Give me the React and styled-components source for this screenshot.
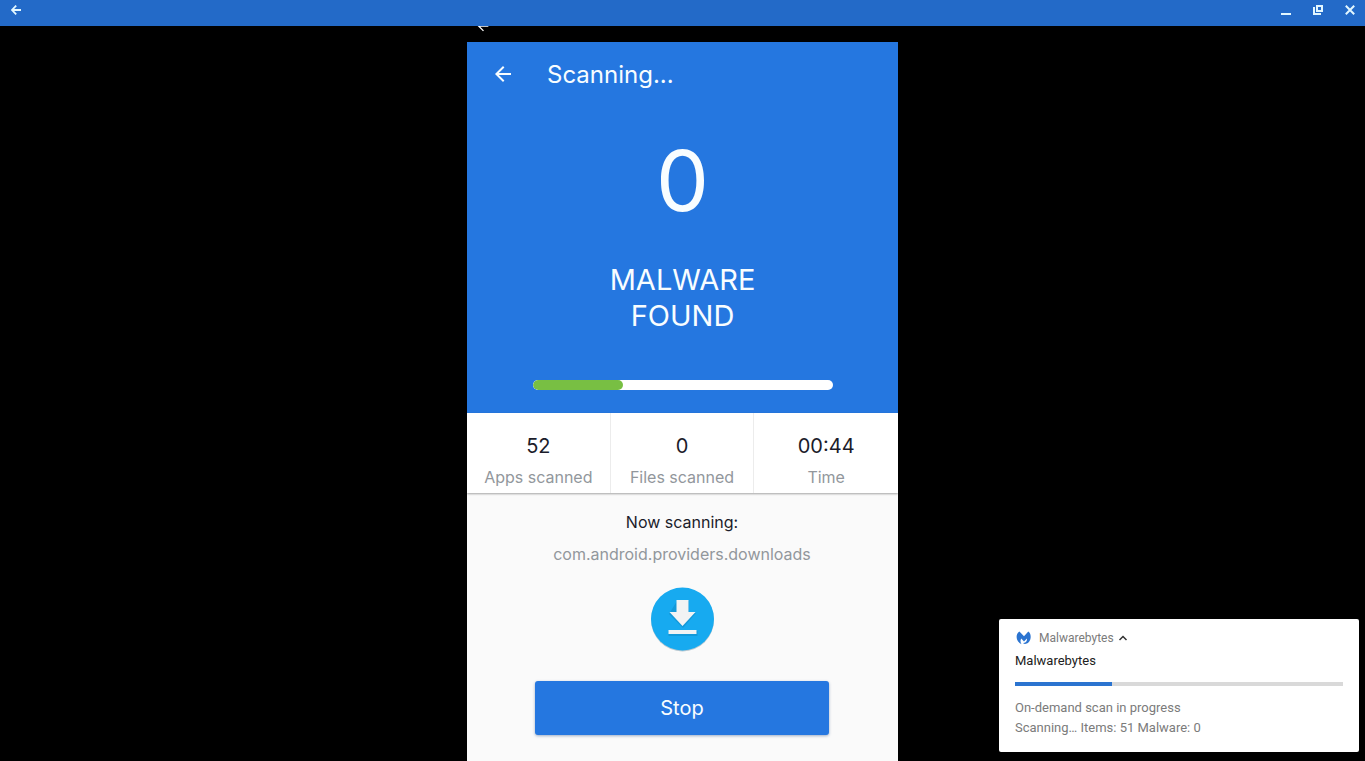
import { useState } from "react";
import styled, { createGlobalStyle, ThemeProvider } from "styled-components";

const theme = {
    accent: "#2577e0",
    bar: "#236ac8",
    green: "#78bf43",
    text: "#1b1c2a",
    muted: "#92979c",
};

const GlobalStyle = createGlobalStyle`
    * {
        box-sizing: border-box;
    }
    body {
        margin: 0;
        background-color: black;
        font-family: Inter, sans-serif;
        overflow: hidden;
    }
    button {
        border: none;
        padding: 0;
        background: none;
        color: inherit;
        font-family: inherit;
    }
    h1, h2, p, dl, dd {
        margin: 0;
        font-weight: 400;
    }
`;

const Window = styled.div`
    min-height: 100vh;
    display: flex;
    flex-direction: column;
`;
const TitleBar = styled.header`
    display: flex;
    justify-content: space-between;
    height: 26px;
    padding: 0 6px 0 7px;
    background-color: ${props => props.theme.bar};
    color: #e2f7ff;
`;
const WindowButtons = styled.div`
    display: flex;
    gap: 14px;
`;
const WindowButton = styled.button`
    display: flex;
    width: 18px;
    height: 20px;
    align-items: center;
    justify-content: center;
`;
const Phone = styled.main`
    flex: 1;
    display: flex;
    flex-direction: column;
    width: 100%;
    max-width: 431px;
    margin: 0 auto;
`;
const StatusStrip = styled.div`
    height: 16px;
    padding-left: 8px;
    overflow: hidden;
    color: white;

    svg {
        display: block;
        margin-top: -8px;
    }
`;
const Hero = styled.section`
    display: flex;
    flex-direction: column;
    align-items: center;
    padding-bottom: 23px;
    background-color: ${props => props.theme.accent};
    color: #f8fdff;
`;
const Toolbar = styled.div`
    align-self: stretch;
    display: flex;
    align-items: center;
    gap: 32px;
    height: 64px;
    padding-left: 24px;
`;
const BackButton = styled.button`
    display: flex;
    width: 24px;
    height: 24px;
    padding: 0;
`;
const Title = styled.h1`
    padding-top: 2px;
    font-size: 24px;
    line-height: 32px;
`;
const Count = styled.p`
    margin-top: 15px;
    font-size: 84px;
    line-height: 120px;
`;
const Verdict = styled.h2`
    width: 180px;
    margin-top: 21px;
    font-size: 29px;
    line-height: 36px;
    text-align: center;
`;
const ScanProgress = styled.div`
    width: 300px;
    height: 10px;
    margin-top: 46px;
    border-radius: 5px;
    background-color: white;
    overflow: hidden;
`;
const ScanFill = styled.div`
    height: 100%;
    border-radius: 5px;
    background-color: ${props => props.theme.green};
`;
const Stats = styled.dl`
    display: grid;
    grid-template-columns: repeat(3, 1fr);
    height: 80px;
    background-color: white;
    box-shadow: 0 1px 2px rgba(0, 0, 0, 0.35);
    text-align: center;
    z-index: 1;
`;
const Stat = styled.div`
    display: flex;
    flex-direction: column-reverse;
    justify-content: flex-end;
    padding-top: 19px;

    &:not(:last-child) {
        border-right: 1px solid #ececec;
    }
`;
const StatValue = styled.dd`
    color: ${props => props.theme.text};
    font-size: 20px;
    line-height: 28px;
`;
const StatLabel = styled.dt`
    margin-top: 5px;
    color: ${props => props.theme.muted};
    font-size: 16px;
    line-height: 24px;
`;
const Current = styled.section`
    flex: 1;
    display: flex;
    flex-direction: column;
    align-items: center;
    padding: 17px 25px 26px 24px;
    background-color: #fafafa;
`;
const Line = styled.p`
    margin-bottom: 8px;
    color: ${props => (props.$muted ? props.theme.muted : props.theme.text)};
    font-size: 16px;
    line-height: 24px;
`;
const AppIcon = styled.svg`
    display: block;
    margin-top: 12px;
`;
const StopButton = styled.button`
    width: 294px;
    height: 54px;
    margin-top: 28px;
    border-radius: 3px;
    background-color: ${props => props.theme.accent};
    box-shadow: 0 1px 3px rgba(20, 60, 120, 0.4);
    color: #f8fdff;
    font-size: 20px;
    line-height: 28px;
`;

const Notification = styled.aside`
    position: fixed;
    right: 6px;
    bottom: 9px;
    width: 360px;
    padding: 11px 16px 14px;
    border-radius: 2px;
    background-color: white;
    color: #7b7b7b;
    font-family: Roboto, sans-serif;
    font-size: 13px;
    line-height: 20px;
`;
const NotificationHead = styled.div`
    display: flex;
    align-items: center;
    height: 16px;
    font-size: 12px;
`;
const AppName = styled.span`
    margin: 0 4px 0 8px;
`;
const NotificationTitle = styled.h2`
    margin-top: 5px;
    color: #212121;
    font-size: 13px;
    line-height: 20px;
`;
const NotificationTrack = styled.div`
    height: 4px;
    margin: 11px 0 12px;
    background-color: #d9d9d9;
`;
const NotificationFill = styled.div`
    height: 100%;
    background-color: #2b74d0;
`;
const Chevron = styled.button`
    display: flex;
    padding: 0;
    color: #333;
`;

function ArrowLeft({ size }) {
    return (
        <svg width={size} height={size} viewBox="0 0 24 24" fill="currentColor">
            <path d="M20 11H7.83l5.59-5.59L12 4l-8 8 8 8 1.41-1.41L7.83 13H20z" />
        </svg>
    );
}

function MalwarebytesLogo() {
    return (
        <svg width="16" height="14" viewBox="0 0 16 14" fill="#2b74d0">
            <path d="M4.400.6C2.600 1.600 1.600 3.600 1.600 6c0 3.200 1.900 6 5 7.200-1-1.400-1.200-2.900-1-4.200L6.300 7.600 9 10.600l2.900-3c.3 1.400-.2 3.100-1.700 3.900-.7.400-1.500.5-2.200.4.800.9 1.900 1.200 3 .9 2.900-.9 4.700-3.600 4.700-6.900 0-2.400-.7-4.400-2.400-5.400L9 5.200z" />
        </svg>
    );
}

const stats = [
    { label: "Apps scanned", value: "52" },
    { label: "Files scanned", value: "0" },
    { label: "Time", value: "00:44" },
];

function App() {
    const [open, setOpen] = useState(true);
    return (
        <ThemeProvider theme={theme}>
            <GlobalStyle />
            <Window>
                <TitleBar>
                    <WindowButton aria-label="Back">
                        <svg width="10" height="10" viewBox="0 0 10 10" fill="none" stroke="currentColor" strokeWidth="1.8">
                            <path d="M10 5H1.500M5.200.6L1 5l4.200 4.400" />
                        </svg>
                    </WindowButton>
                    <WindowButtons>
                        <WindowButton aria-label="Minimize">
                            <svg width="10" height="10" viewBox="0 0 10 10" fill="currentColor">
                                <path d="M0 8h10v2H0z" />
                            </svg>
                        </WindowButton>
                        <WindowButton aria-label="Restore">
                            <svg width="10" height="10" viewBox="0 0 10 10" fill="none" stroke="currentColor" strokeWidth="2">
                                <path d="M4 1h5v5H4zM1 2v7h7" />
                            </svg>
                        </WindowButton>
                        <WindowButton aria-label="Close">
                            <svg width="10" height="10" viewBox="0 0 10 10" fill="none" stroke="currentColor" strokeWidth="2">
                                <path d="M.8.8l8.400 8.400M9.200.8L.8 9.200" />
                            </svg>
                        </WindowButton>
                    </WindowButtons>
                </TitleBar>
                <Phone>
                    <StatusStrip>
                        <ArrowLeft size={16} />
                    </StatusStrip>
                    <Hero>
                        <Toolbar>
                            <BackButton aria-label="Navigate up">
                                <ArrowLeft size={24} />
                            </BackButton>
                            <Title>Scanning...</Title>
                        </Toolbar>
                        <Count>0</Count>
                        <Verdict>MALWARE FOUND</Verdict>
                        <ScanProgress role="progressbar" aria-label="Scan progress" aria-valuenow={30}>
                            <ScanFill style={{ width: "30%" }} />
                        </ScanProgress>
                    </Hero>
                    <Stats>
                        {stats.map(stat => (
                            <Stat key={stat.label}>
                                <StatLabel>{stat.label}</StatLabel>
                                <StatValue>{stat.value}</StatValue>
                            </Stat>
                        ))}
                    </Stats>
                    <Current>
                        <Line>Now scanning:</Line>
                        <Line $muted>com.android.providers.downloads</Line>
                        <AppIcon width="66" height="67" viewBox="0 0 66 67">
                            <circle cx="33.500" cy="34" r="31.500" fill="#8fa9b5" opacity="0.6" />
                            <circle cx="33.500" cy="33" r="31.500" fill="#17aaf0" />
                            <path d="M28 15h12v12h7L34 42 20 28z" fill="#0d87c4" opacity="0.5" />
                            <path d="M19.500 45h29v5h-29z" fill="#0d87c4" opacity="0.5" />
                            <path d="M27.500 14h12v12h7l-13 14-13-14h7z" fill="#f1f3f4" />
                            <path d="M19.500 44h28v4h-28z" fill="#f1f3f4" />
                        </AppIcon>
                        <StopButton>Stop</StopButton>
                    </Current>
                </Phone>
            </Window>
            <Notification>
                <NotificationHead>
                    <MalwarebytesLogo />
                    <AppName>Malwarebytes</AppName>
                    <Chevron aria-label="Toggle details" aria-expanded={open} onClick={() => setOpen(!open)}>
                        <svg width="10" height="8" viewBox="0 0 10 8" fill="none" stroke="currentColor" strokeWidth="1.5">
                            <path d="M1.500 6L5 2.500 8.500 6" />
                        </svg>
                    </Chevron>
                </NotificationHead>
                <NotificationTitle>Malwarebytes</NotificationTitle>
                <NotificationTrack role="progressbar" aria-label="On-demand scan" aria-valuenow={30}>
                    <NotificationFill style={{ width: "29.6%" }} />
                </NotificationTrack>
                {open && (
                    <>
                        <p>On-demand scan in progress</p>
                        <p>Scanning… Items: 51 Malware: 0</p>
                    </>
                )}
            </Notification>
        </ThemeProvider>
    );
}

export default App;
